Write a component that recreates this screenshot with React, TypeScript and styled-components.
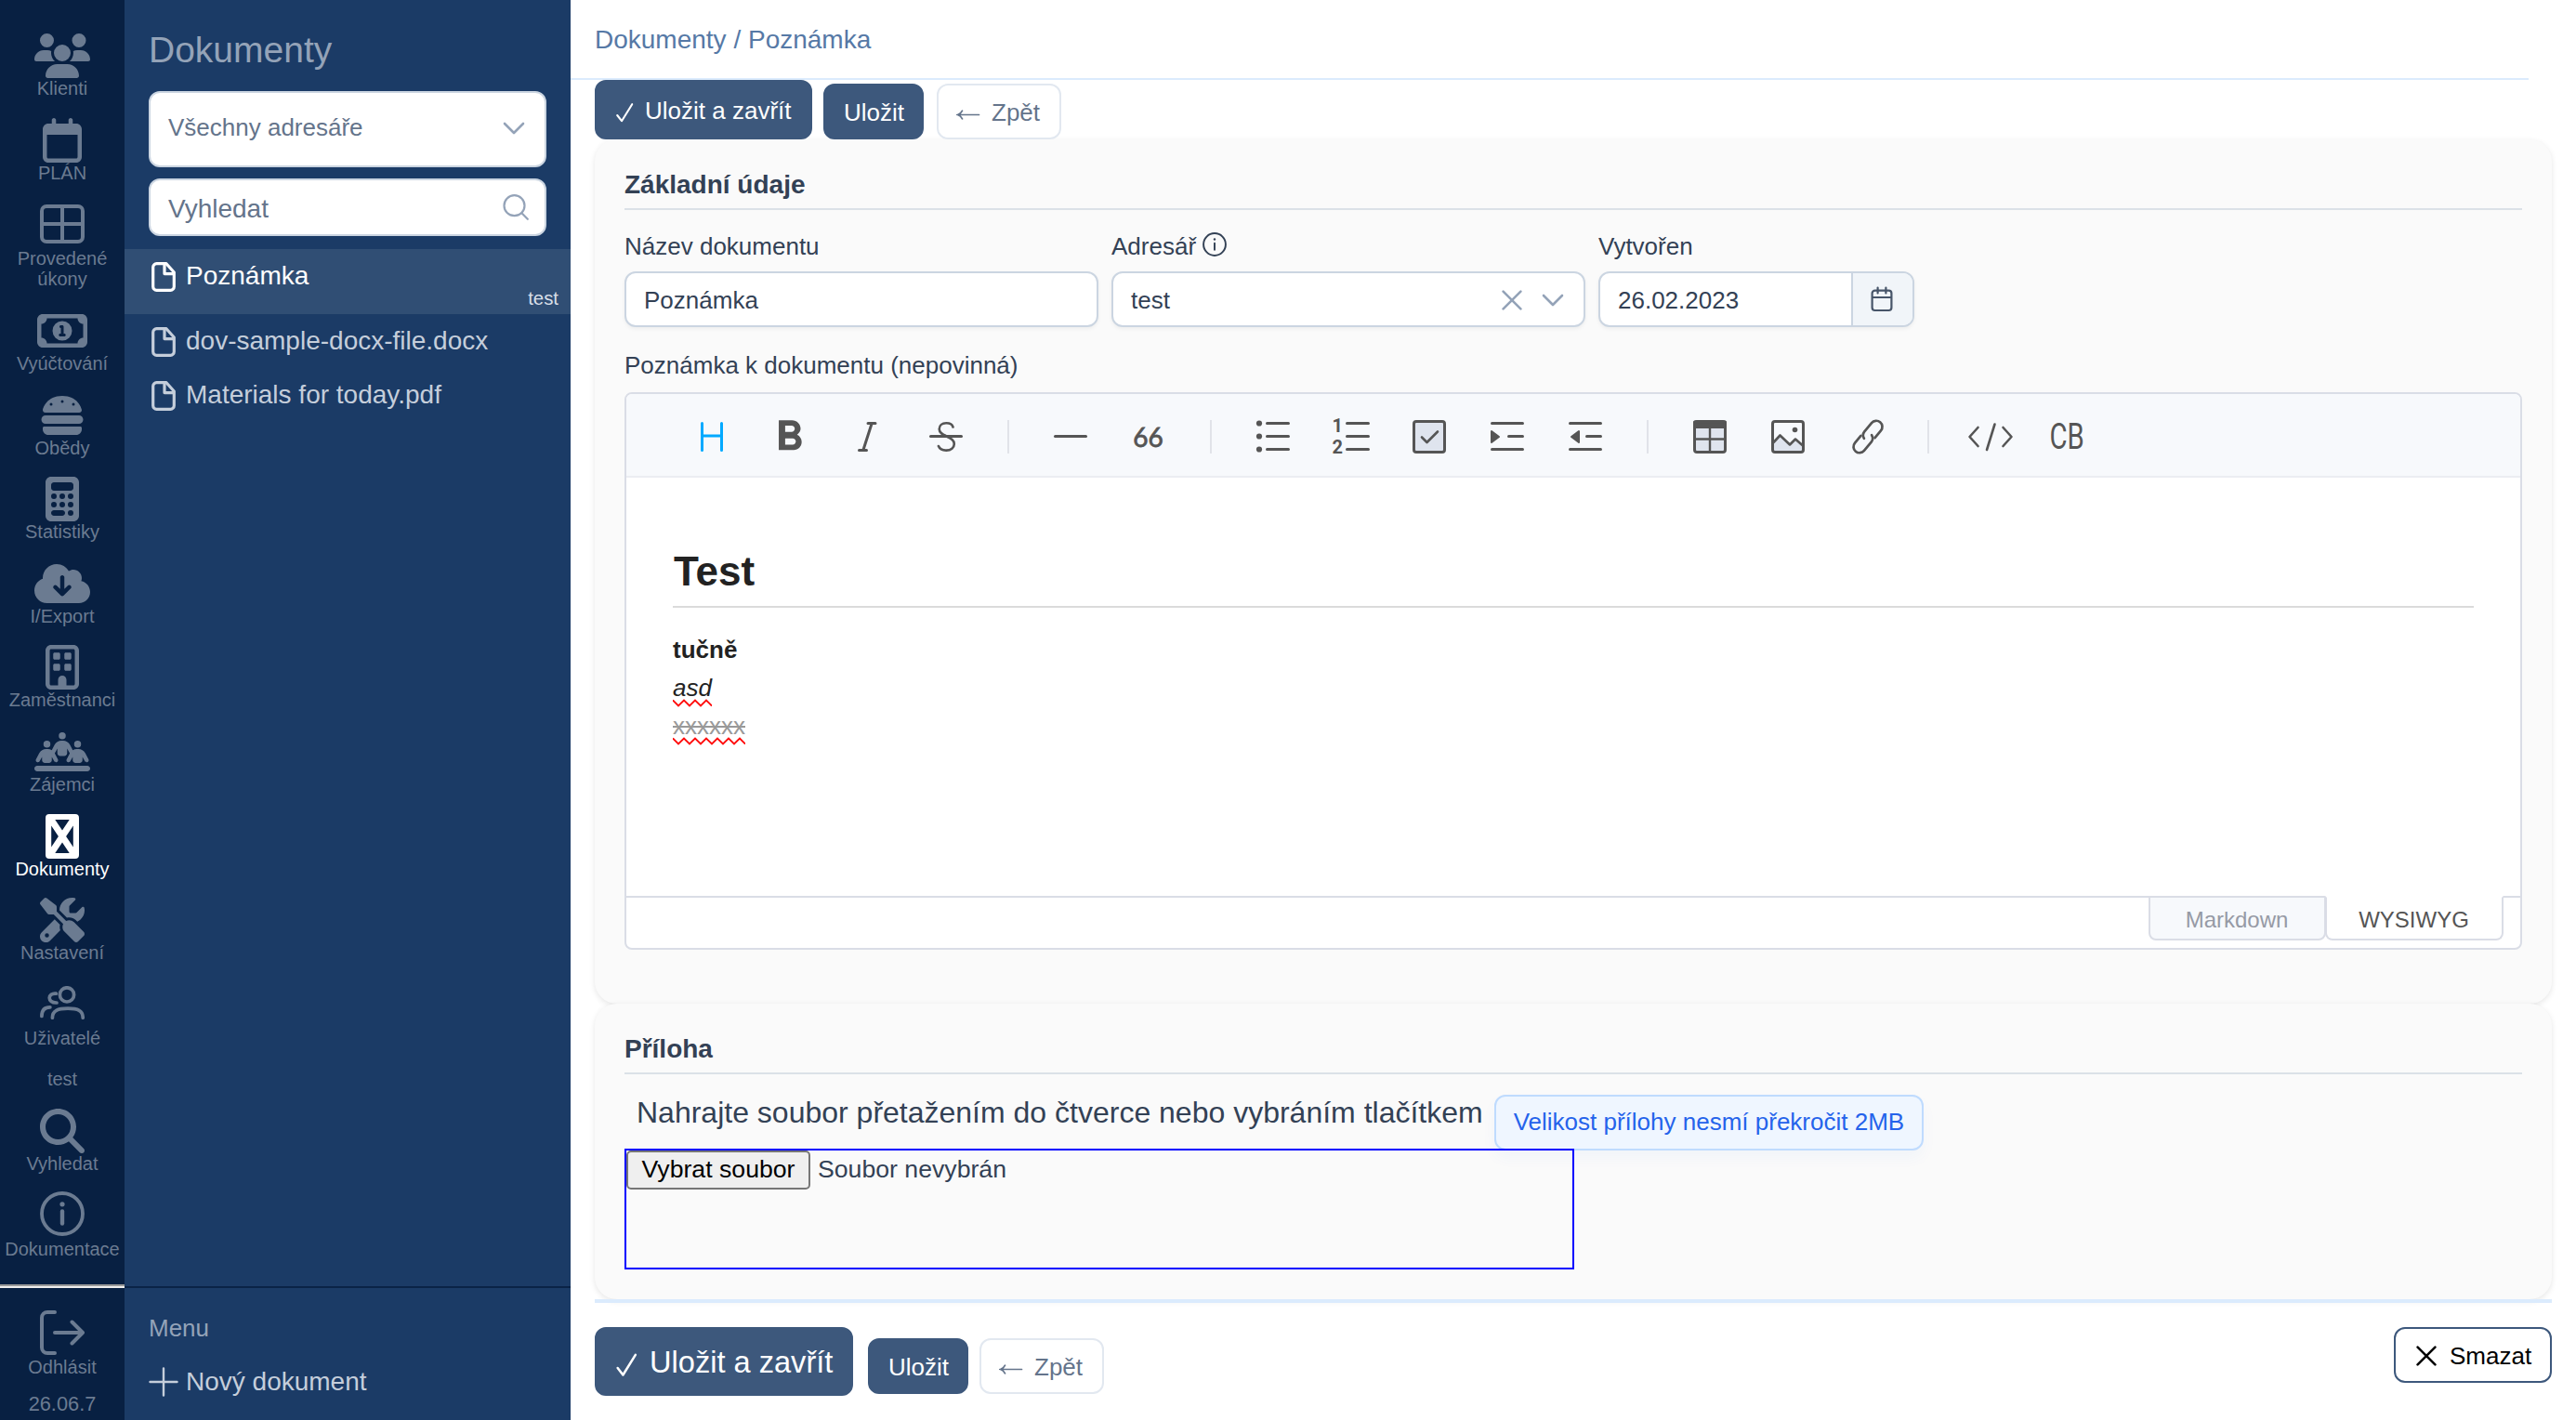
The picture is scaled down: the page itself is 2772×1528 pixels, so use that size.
import React from "react";
import styled, { createGlobalStyle, css } from "styled-components";
import {
  FaBurger,
  FaCalculator,
  FaCloudArrowDown,
  FaMagnifyingGlass,
  FaPeopleLine,
  FaRegBuilding,
  FaRegCalendar,
  FaRegMoneyBill1,
  FaScrewdriverWrench,
  FaUsers,
} from "react-icons/fa6";
import { MdFormatBold } from "react-icons/md";

const GlobalStyle = createGlobalStyle`
  * {
    box-sizing: border-box;
  }
  body {
    margin: 0;
    background: #fff;
    color: #334155;
    font-family: "Liberation Sans", Arial, sans-serif;
    font-size: 26px;
  }
  button, input {
    font-family: inherit;
    font-size: inherit;
    margin: 0;
  }
  svg {
    display: block;
    flex-shrink: 0;
  }
`;

const Layout = styled.div`
  display: flex;
  width: 2772px;
  height: 1528px;
  overflow: hidden;
`;

/* ---------- left rail ---------- */

const Rail = styled.nav`
  display: flex;
  flex-direction: column;
  justify-content: space-between;
  width: 134px;
  flex-shrink: 0;
  background: #082042;
  color: #6b7b91;
`;

const RailList = styled.div`
  display: flex;
  flex-direction: column;
  gap: 19.8px;
  padding-top: 36.4px;
`;

const RailItem = styled.a<{ $active?: boolean; $textOnly?: boolean }>`
  display: flex;
  flex-direction: column;
  align-items: center;
  padding-top: ${({ $textOnly }) => ($textOnly ? "2px" : "0")};
  font-size: 20px;
  line-height: 22.8px;
  text-align: center;
  color: ${({ $active }) => ($active ? "#fff" : "inherit")};
`;

const RailIcon = styled.span<{ $shift?: number }>`
  display: flex;
  align-items: center;
  justify-content: center;
  height: ${({ $shift }) => ($shift ? "49px" : "48px")};
  padding-bottom: ${({ $shift }) => ($shift || 0) * 2}px;
`;

const RailFooter = styled.div`
  display: flex;
  flex-direction: column;
  height: 146px;
`;

const RailDivider = styled.hr`
  width: 100%;
  height: 4px;
  margin: 0 0 25px;
  border: 0;
  border-top: 2px solid #9a9a9a;
  border-bottom: 2px solid #eee;
`;

const Version = styled.div`
  margin-top: 16px;
  font-size: 21.8px;
  line-height: 24px;
  text-align: center;
`;

/* ---------- documents panel ---------- */

const Panel = styled.aside`
  display: flex;
  flex-direction: column;
  width: 480px;
  flex-shrink: 0;
  background: #1b3b66;
  color: #c5cedb;
`;

const PanelTitle = styled.h1`
  margin: 0;
  padding: 30px 26px 20px;
  font-size: 39px;
  font-weight: 400;
  line-height: 48px;
  color: #94a3b8;
`;

const PanelFilters = styled.div`
  display: flex;
  flex-direction: column;
  gap: 12px;
  padding: 0 26px 14px;
`;

const FilterBox = styled.div<{ $tall?: boolean }>`
  display: flex;
  align-items: center;
  justify-content: space-between;
  height: ${({ $tall }) => ($tall ? "82px" : "62px")};
  padding: ${({ $tall }) => ($tall ? "0 21px 3px 19px" : "0 17px 0 19px")};
  border: 2px solid #cbd5e1;
  border-radius: 12px;
  background: #fff;
  color: #64748b;
  font-size: ${({ $tall }) => ($tall ? "26px" : "28px")};

  span {
    padding-top: ${({ $tall }) => ($tall ? "0" : "3px")};
  }
`;

const DocList = styled.div`
  flex: 1;
`;

const DocItem = styled.div<{ $selected?: boolean }>`
  display: flex;
  flex-direction: column;
  padding-left: 29px;
  height: ${({ $selected }) => ($selected ? "70px" : "58px")};
  background: ${({ $selected }) => ($selected ? "#304e74" : "none")};
  color: ${({ $selected }) => ($selected ? "#fff" : "inherit")};
`;

const DocRow = styled.div`
  display: flex;
  align-items: center;
  height: 58px;
  flex-shrink: 0;
  gap: 11px;
  padding-top: 2px;
  font-size: 28px;
  line-height: 32px;

  span {
    padding-bottom: 2px;
  }
`;

const DocTag = styled.div`
  margin: -17px 13px 0 0;
  font-size: 20.4px;
  line-height: 24px;
  text-align: right;
  color: #d9dfe8;
`;

const PanelFooter = styled.div`
  height: 144px;
  padding: 27px 0 0 26px;
  border-top: 2px solid #0a2347;
`;

const PanelCaption = styled.div`
  margin-bottom: 12px;
  font-size: 26px;
  line-height: 32px;
  color: #94a3b8;
`;

const NewDocument = styled.div`
  display: flex;
  align-items: center;
  gap: 8px;
  height: 58px;
  padding-top: 1px;
  font-size: 28px;
  line-height: 32px;
`;

/* ---------- content ---------- */

const Main = styled.main`
  display: flex;
  flex-direction: column;
  flex: 1;
`;

const Breadcrumb = styled.header`
  display: flex;
  align-items: center;
  width: 2107px;
  height: 86px;
  padding: 1px 0 0 26px;
  border-bottom: 2px solid #dbebfd;
  font-size: 28px;
  color: #5679a6;
`;

const Body = styled.div`
  padding: 0 26px;
`;

const ActionBar = styled.div`
  display: flex;
  align-items: flex-end;
  height: 64px;
`;

const Button = styled.button<{ $variant?: "primary" | "plain" | "danger"; $large?: boolean }>`
  display: flex;
  align-items: center;
  height: 60px;
  padding: 1px 21px 0;
  border: 2px solid #3d587c;
  border-radius: 12px;
  background: #3d587c;
  color: #fff;
  line-height: 34px;
  white-space: nowrap;

  ${({ $variant }) =>
    $variant === "plain" &&
    css`
      padding: 1px 19px 0;
      border-color: #e2e8f0;
      background: #fff;
      color: #64748b;
    `}

  ${({ $variant }) =>
    $variant === "danger" &&
    css`
      gap: 14px;
      width: 170px;
      padding: 1px 22px 0;
      background: #fff;
      color: #000;
    `}

  ${({ $large }) =>
    $large &&
    css`
      height: 74px;
      font-size: 32.6px;
    `}
`;

const SaveCloseButton = styled(Button)`
  height: ${({ $large }) => ($large ? "74px" : "64px")};
  width: ${({ $large }) => ($large ? "278px" : "234px")};
  margin-right: ${({ $large }) => ($large ? "16px" : "12px")};
  padding-left: 20px;
  gap: ${({ $large }) => ($large ? "13px" : "12px")};

  svg {
    margin-top: ${({ $large }) => ($large ? "6px" : "4px")};
  }
`;

const SaveButton = styled(Button)<{ $gap: number }>`
  width: 108px;
  margin-right: ${({ $gap }) => $gap}px;
  padding: 1px 20px 0;
`;

const BackButton = styled(Button)`
  width: 134px;
  gap: 12px;

  svg {
    margin-top: 4px;
  }
`;

const Card = styled.section<{ $height: number }>`
  height: ${({ $height }) => $height}px;
  padding: 33px 32px 0;
  border-radius: 24px;
  background: #fafafa;
  box-shadow: 0 2px 6px rgba(0, 0, 0, 0.1);
`;

const CardTitle = styled.h2`
  margin: 0;
  padding-bottom: 9px;
  border-bottom: 2px solid #dbe1e7;
  font-size: 28px;
  font-weight: 700;
  line-height: 32px;
`;

const Fields = styled.div`
  display: flex;
  gap: 14px;
  margin: 24px 0 26px;
`;

const Field = styled.div<{ $width: number }>`
  width: ${({ $width }) => $width}px;
`;

const Label = styled.label`
  display: flex;
  align-items: center;
  gap: 7px;
  height: 30px;
  line-height: 30px;

  svg {
    margin-bottom: 5px;
  }
`;

const Control = styled.div`
  display: flex;
  align-items: center;
  height: 60px;
  margin-top: 12px;
  padding-left: 19px;
  border: 2px solid #cbd5e1;
  border-radius: 12px;
  background: #fff;
  box-shadow: 0 2px 4px rgba(18, 18, 23, 0.05);
  overflow: hidden;

  span {
    flex: 1;
    padding-top: 2px;
  }
`;

const SelectIcons = styled.div`
  display: flex;
  align-items: center;
  gap: 21px;
  padding: 2px 21px 0 0;
`;

const DateButton = styled.div`
  display: flex;
  align-items: center;
  justify-content: center;
  width: 66px;
  height: 56px;
  padding-right: 2px;
  border-left: 2px solid #cbd5e1;
  background: #f1f5f9;
`;

/* ---------- editor ---------- */

const Editor = styled.div`
  display: flex;
  flex-direction: column;
  height: 600px;
  margin-top: 14px;
  border: 2px solid #dadde6;
  border-radius: 8px;
  background: #fff;
  overflow: hidden;
`;

const Toolbar = styled.div`
  display: flex;
  align-items: center;
  gap: 20px;
  height: 90px;
  padding: 4px 0 0 60px;
  border-bottom: 2px solid #ebedf2;
  background: #f7f9fc;
`;

const ToolDivider = styled.span`
  width: 2px;
  height: 36px;
  margin: 0 14px;
  background: #e1e3e9;
`;

const Tool = styled.span<{ $active?: boolean }>`
  display: flex;
  align-items: center;
  justify-content: center;
  width: 64px;
  height: 64px;
  color: ${({ $active }) => ($active ? "#00a9ff" : "#555")};
`;

const BoldIcon = styled(MdFormatBold)`
  margin-right: 2px;
`;

const QuoteGlyph = styled.span`
  padding-right: 1px;
  font-family: Lato, sans-serif;
  font-size: 28px;
  font-weight: 400;
  line-height: 32px;
  -webkit-text-stroke: 0.8px #555;
`;

const CodeBlockGlyph = styled.span`
  margin-right: 3px;
  font-family: Roboto, sans-serif;
  font-size: 38px;
  line-height: 44px;
  transform: scaleX(0.77);
`;

const Content = styled.div`
  flex: 1;
  padding: 75px 50px 0;
  font-size: 26px;
  line-height: 41px;
  color: #222;

  h2 {
    margin: 0 0 25px;
    padding-bottom: 11px;
    border-bottom: 2px solid #dbdbdb;
    font-size: 44px;
    line-height: 52px;
    text-indent: 1px;
  }
  p {
    margin: 0;
    height: 41px;
  }
  del {
    color: #999;
  }
`;

const Misspelled = styled.span`
  position: relative;
  display: inline-block;

  svg {
    position: absolute;
    left: 0;
    bottom: 0;
  }
`;

const ModeBar = styled.div`
  display: flex;
  justify-content: flex-end;
  height: 56px;
  padding-right: 18px;
  border-top: 2px solid #dadde6;
`;

const ModeTab = styled.div<{ $active?: boolean }>`
  display: flex;
  align-items: center;
  justify-content: center;
  width: ${({ $active }) => ($active ? "192px" : "191px")};
  height: 48px;
  margin: -2px 0 0 ${({ $active }) => ($active ? "-1px" : "0")};
  padding: 3px 1px 0 0;
  border: 2px solid #dadde6;
  border-top-color: ${({ $active }) => ($active ? "#fff" : "#dadde6")};
  border-radius: 0 0 8px 8px;
  background: ${({ $active }) => ($active ? "#fff" : "#f7f9fc")};
  color: ${({ $active }) => ($active ? "#555" : "#969aa5")};
  font-size: 24px;
  line-height: 28px;
`;

/* ---------- attachment ---------- */

const UploadRow = styled.div`
  display: flex;
  align-items: flex-start;
  gap: 12px;
  height: 80px;
  padding: 22px 0 0 13px;
`;

const UploadHint = styled.div`
  padding-top: 1px;
  font-size: 32px;
  line-height: 37px;
  white-space: nowrap;
`;

const SizeBadge = styled.div`
  display: flex;
  align-items: center;
  width: 462px;
  height: 60px;
  padding: 0 0 2px 19px;
  border: 2px solid #bfdbfe;
  border-radius: 12px;
  background: #eff6ff;
  box-shadow: 0 8px 16px rgba(37, 99, 235, 0.04);
  color: #2563eb;
  white-space: nowrap;
`;

const DropZone = styled.div`
  position: relative;
  display: flex;
  align-items: flex-start;
  gap: 8px;
  width: 1022px;
  height: 130px;
  border: 2px solid #0000ff;
  font-size: 26.67px;
  line-height: 41px;
`;

const FileButton = styled.button`
  width: 198px;
  height: 42px;
  padding: 0 0 1px;
  border: 2px solid #767676;
  border-radius: 5px;
  background: #efefef;
  color: #000;
`;

const FooterBar = styled.footer`
  display: flex;
  align-items: flex-start;
  justify-content: space-between;
  position: relative;
  padding-top: 26px;
  border-top: 4px solid #dbebfd;
`;

const FooterActions = styled.div`
  display: flex;

  > * + * {
    margin-top: 12px;
  }
`;

/* ---------- icons ---------- */

const WindowIcon = () => (
  <svg width="48" height="42" viewBox="0 0 48 42" fill="none" stroke="currentColor" strokeWidth="4">
    <rect x="2" y="2" width="44" height="38" rx="5" />
    <path d="M24 2v38M2 21h44" />
  </svg>
);

const CrossBoxIcon = () => (
  <svg width="36" height="48" viewBox="0 0 36 48" fill="currentColor">
    <path
      fillRule="evenodd"
      d="M4 0h28a4 4 0 0 1 4 4v40a4 4 0 0 1-4 4H4a4 4 0 0 1-4-4V4a4 4 0 0 1 4-4zM10.3 6L18 17.5 25.7 6zM6.2 12.5v23L13.9 24zM29.8 12.5L22.1 24l7.7 11.5zM10.3 42h15.4L18 30.5z"
    />
  </svg>
);

const PeopleIcon = () => (
  <svg width="48" height="36" viewBox="0 0 48 36" fill="none" stroke="currentColor" strokeWidth="3.7" strokeLinecap="round">
    <circle cx="29" cy="9.4" r="7.6" />
    <path d="M13.4 34.2C13.4 26.5 19 24.2 30 24.2s16.2 2.3 16.2 10" />
    <path d="M17.4 8.2C8 7 7.4 18.4 18 18" />
    <path d="M1.9 32.4c0-6.6 3-9.6 9-9.6" />
  </svg>
);

const InfoIcon = ({ size, thin }: { size: number; thin?: boolean }) => (
  <svg width={size} height={size} viewBox="0 0 48 48" fill="none" stroke="currentColor" strokeWidth={thin ? 3.6 : 3.8} strokeLinecap="round">
    <circle cx="24" cy="24" r="22" />
    <path d="M24 21.5v13" strokeWidth={thin ? 3.6 : 4.4} />
    <circle cx="24" cy="13.8" r={thin ? 2.2 : 2.6} fill="currentColor" stroke="none" />
  </svg>
);

const LogoutIcon = () => (
  <svg width="48" height="48" viewBox="0 0 48 48" fill="none" stroke="currentColor" strokeWidth="4" strokeLinecap="round" strokeLinejoin="round">
    <path d="M16 2H8a6 6 0 0 0-6 6v32a6 6 0 0 0 6 6h8" />
    <path d="M16 24h30M34.5 12.5L46 24 34.5 35.5" />
  </svg>
);

const FileIcon = () => (
  <svg width="26" height="32" viewBox="0 0 26 32" fill="none" stroke="currentColor" strokeWidth="3.2" strokeLinejoin="round">
    <path d="M16 1.7H5.5a3.8 3.8 0 0 0-3.8 3.8v21a3.8 3.8 0 0 0 3.8 3.8h15a3.8 3.8 0 0 0 3.8-3.8V11z" />
    <path d="M14 2v10.6h10" />
  </svg>
);

const PlusIcon = () => (
  <svg width="32" height="32" viewBox="0 0 32 32" fill="none" stroke="currentColor" strokeWidth="2.4" strokeLinecap="round">
    <path d="M16 1.5v29M1.5 16h29" />
  </svg>
);

const ChevronIcon = () => (
  <svg width="24" height="14" viewBox="0 0 24 14" fill="none" stroke="#94a3b8" strokeWidth="2.6" strokeLinecap="round" strokeLinejoin="round">
    <path d="M2 2l10 10L22 2" />
  </svg>
);

const SearchIcon = () => (
  <svg width="28" height="28" viewBox="0 0 28 28" fill="none" stroke="#94a3b8" strokeWidth="2.2" strokeLinecap="round">
    <circle cx="12.5" cy="12.2" r="11" />
    <path d="M20.4 20.2L26.8 26.8" />
  </svg>
);

const CrossIcon = ({ color }: { color: string }) => (
  <svg width="22" height="22" viewBox="0 0 22 22" fill="none" stroke={color} strokeWidth="2.6" strokeLinecap="round">
    <path d="M1.6 1.6l18.8 18.8M20.4 1.6L1.6 20.4" />
  </svg>
);

const CheckIcon = ({ large }: { large?: boolean }) => (
  <svg width={large ? 24 : 20} height={large ? 27 : 22} viewBox="0 0 20 22" fill="none" stroke="currentColor" strokeWidth="2.1" strokeLinecap="round" strokeLinejoin="round">
    <path d="M2.2 14L7 20.2 18.2 2.2" />
  </svg>
);

const ArrowIcon = () => (
  <svg width="26" height="14" viewBox="0 0 26 14" fill="none" stroke="currentColor" strokeWidth="1.7" strokeLinecap="round">
    <path d="M1.5 7.5h23M6.5 3.2C5.4 5.6 4 6.8 1.5 7.5c2.5.7 3.9 1.9 5 4.3" />
  </svg>
);

const CalendarIcon = () => (
  <svg width="24" height="28" viewBox="0 0 24 28" fill="none" stroke="#475569" strokeWidth="2.2" strokeLinecap="round">
    <rect x="1.6" y="4.6" width="20.8" height="21.4" rx="3" />
    <path d="M2 12h20M7.6 1.5v6M16.4 1.5v6" />
  </svg>
);

const ToolIcon = ({ children }: { children: React.ReactNode }) => (
  <svg width="64" height="64" viewBox="0 0 64 64" fill="none" stroke="currentColor" strokeWidth="3" strokeLinecap="round" strokeLinejoin="round">
    {children}
  </svg>
);

const Squiggle = ({ width }: { width: number }) => {
  const points: string[] = [];
  for (let x = 0, i = 0; x <= width; x += 6, i++) {
    points.push(`${x},${i % 2 ? 7.5 : 1.5}`);
  }
  return (
    <svg width={width} height="9" viewBox={`0 0 ${width} 9`} fill="none" stroke="#ff0000" strokeWidth="1.8">
      <polyline points={points.join(" ")} />
    </svg>
  );
};

const railItems = [
  { title: "Klienti", icon: <FaUsers size={48} style={{ width: 60 }} /> },
  { title: "PLÁN", icon: <FaRegCalendar size={48} /> },
  { title: "Provedené úkony", icon: <WindowIcon />, shift: 1 },
  { title: "Vyúčtování", icon: <FaRegMoneyBill1 size={48} style={{ width: 54 }} /> },
  { title: "Obědy", icon: <FaBurger size={48} /> },
  { title: "Statistiky", icon: <FaCalculator size={48} /> },
  { title: "I/Export", icon: <FaCloudArrowDown size={48} style={{ width: 60 }} /> },
  { title: "Zaměstnanci", icon: <FaRegBuilding size={48} /> },
  { title: "Zájemci", icon: <FaPeopleLine size={48} style={{ width: 60 }} /> },
  { title: "Dokumenty", icon: <CrossBoxIcon />, active: true },
  { title: "Nastavení", icon: <FaScrewdriverWrench size={48} /> },
  { title: "Uživatelé", icon: <PeopleIcon />, shift: 2 },
  { title: "test" },
  { title: "Vyhledat", icon: <FaMagnifyingGlass size={48} /> },
  { title: "Dokumentace", icon: <InfoIcon size={48} />, shift: 2 },
];

const documents = [
  { name: "Poznámka", tag: "test", selected: true },
  { name: "dov-sample-docx-file.docx" },
  { name: "Materials for today.pdf" },
];

const EditorToolbar: React.FC = () => (
  <Toolbar>
    <Tool $active>
      <ToolIcon>
        <path d="M21.5 17.5v29M42.5 17.5v29M21.5 31h21" />
      </ToolIcon>
    </Tool>
    <Tool>
      <BoldIcon size={55} />
    </Tool>
    <Tool>
      <ToolIcon>
        <path d="M32 17.5h8M22.5 46.5h8M36 18L27 46" />
      </ToolIcon>
    </Tool>
    <Tool>
      <ToolIcon>
        <path d="M15.5 31.5h33" />
        <path
          strokeWidth="2.6"
          d="M39.5 21.5c-.8-2.5-3.6-4.2-7-4.2-4.6 0-7.8 2.6-7.8 6.4 0 3.8 3.4 5.6 7.8 7.8 5 2.4 8.3 4.2 8.3 8.3 0 4-3.6 6.8-8.4 6.8-4.2 0-7.4-1.8-8.5-4.6"
        />
      </ToolIcon>
    </Tool>
    <ToolDivider />
    <Tool>
      <ToolIcon>
        <path d="M15.5 31.5h33" />
      </ToolIcon>
    </Tool>
    <Tool>
      <QuoteGlyph>66</QuoteGlyph>
    </Tool>
    <ToolDivider />
    <Tool>
      <ToolIcon>
        <path d="M25.5 17.5h23M25.5 31.5h23M25.5 45.5h23" />
        <g fill="currentColor" stroke="none">
          <circle cx="17" cy="17.5" r="3.1" />
          <circle cx="17" cy="31.5" r="3.1" />
          <circle cx="17" cy="45.5" r="3.1" />
        </g>
      </ToolIcon>
    </Tool>
    <Tool>
      <ToolIcon>
        <path d="M27.5 17.5h23M27.5 31.5h23M27.5 45.5h23" />
        <g fill="currentColor" stroke="none" fontFamily="Roboto, sans-serif" fontWeight="700" fontSize="20">
          <text x="11.5" y="27">1</text>
          <text x="11.5" y="50">2</text>
        </g>
      </ToolIcon>
    </Tool>
    <Tool>
      <ToolIcon>
        <rect x="15.5" y="15.5" width="33" height="33" rx="2.5" fill="#dfe4ee" />
        <path d="M24 32.5l5.5 5.5L41 26.5" strokeWidth="2.6" />
      </ToolIcon>
    </Tool>
    <Tool>
      <ToolIcon>
        <path d="M15.5 17.5h33M33.5 31.5h15M15.5 45.5h33" />
        <path d="M15 26v12l8-6z" fill="currentColor" strokeWidth="2" />
      </ToolIcon>
    </Tool>
    <Tool>
      <ToolIcon>
        <path d="M15.5 17.5h33M33.5 31.5h15M15.5 45.5h33" />
        <path d="M25 26v12l-8-6z" fill="currentColor" strokeWidth="2" />
      </ToolIcon>
    </Tool>
    <ToolDivider />
    <Tool>
      <ToolIcon>
        <rect x="15.5" y="15.5" width="33" height="33" rx="2.5" fill="#dfe4ee" />
        <path d="M15.5 16h33v5.5h-33z" fill="currentColor" />
        <path d="M32 22v26M16 34.5h32" strokeWidth="2.4" />
      </ToolIcon>
    </Tool>
    <Tool>
      <ToolIcon>
        <path d="M16 40l7.5-9.5 10 10 6-6 8.5 7v5q0 2-2 2H18q-2 0-2-2z" fill="#dfe4ee" stroke="none" />
        <rect x="15.5" y="15.5" width="33" height="33" rx="2.5" />
        <path d="M16.5 38l7-7.5 10.5 10 6-6 8 7" strokeWidth="2.6" />
        <circle cx="39.5" cy="24.5" r="2.8" fill="currentColor" stroke="none" />
      </ToolIcon>
    </Tool>
    <Tool>
      <ToolIcon>
        <g transform="translate(2 0) rotate(-50 32 32)" strokeWidth="2.7">
          <path d="M28 25.5H18a6.5 6.5 0 0 0 0 13h12a6.5 6.5 0 0 0 6-4.5" />
          <path d="M36 38.5h10a6.5 6.5 0 0 0 0-13H34a6.5 6.5 0 0 0-6 4.5" />
        </g>
      </ToolIcon>
    </Tool>
    <ToolDivider />
    <Tool>
      <ToolIcon>
        <path d="M18.5 22L9.5 32l9 10M45.5 22l9 10-9 10M36.5 18.5L28 46" strokeWidth="2.6" />
      </ToolIcon>
    </Tool>
    <Tool>
      <CodeBlockGlyph>CB</CodeBlockGlyph>
    </Tool>
  </Toolbar>
);

const App: React.FC = () => {
  return (
    <>
      <GlobalStyle />
      <Layout>
        <Rail>
          <RailList>
            {railItems.map((item) => (
              <RailItem key={item.title} $active={item.active} $textOnly={!item.icon}>
                {item.icon && <RailIcon $shift={item.shift}>{item.icon}</RailIcon>}
                {item.title}
              </RailItem>
            ))}
          </RailList>
          <RailFooter>
            <RailDivider />
            <RailItem>
              <RailIcon $shift={2}>
                <LogoutIcon />
              </RailIcon>
              Odhlásit
            </RailItem>
            <Version>26.06.7</Version>
          </RailFooter>
        </Rail>

        <Panel>
          <PanelTitle>Dokumenty</PanelTitle>
          <PanelFilters>
            <FilterBox $tall>
              <span>Všechny adresáře</span>
              <ChevronIcon />
            </FilterBox>
            <FilterBox>
              <span>Vyhledat</span>
              <SearchIcon />
            </FilterBox>
          </PanelFilters>
          <DocList>
            {documents.map((doc) => (
              <DocItem key={doc.name} $selected={doc.selected}>
                <DocRow>
                  <FileIcon />
                  <span>{doc.name}</span>
                </DocRow>
                {doc.tag && <DocTag>{doc.tag}</DocTag>}
              </DocItem>
            ))}
          </DocList>
          <PanelFooter>
            <PanelCaption>Menu</PanelCaption>
            <NewDocument>
              <PlusIcon />
              <span>Nový dokument</span>
            </NewDocument>
          </PanelFooter>
        </Panel>

        <Main>
          <Breadcrumb>Dokumenty / Poznámka</Breadcrumb>
          <Body>
            <ActionBar>
              <SaveCloseButton>
                <CheckIcon />
                Uložit a zavřít
              </SaveCloseButton>
              <SaveButton $gap={14}>Uložit</SaveButton>
              <BackButton $variant="plain">
                <ArrowIcon />
                Zpět
              </BackButton>
            </ActionBar>

            <Card $height={930}>
              <CardTitle>Základní údaje</CardTitle>
              <Fields>
                <Field $width={510}>
                  <Label>Název dokumentu</Label>
                  <Control>
                    <span>Poznámka</span>
                  </Control>
                </Field>
                <Field $width={510}>
                  <Label>
                    Adresář
                    <InfoIcon size={26} thin />
                  </Label>
                  <Control>
                    <span>test</span>
                    <SelectIcons>
                      <CrossIcon color="#94a3b8" />
                      <ChevronIcon />
                    </SelectIcons>
                  </Control>
                </Field>
                <Field $width={340}>
                  <Label>Vytvořen</Label>
                  <Control>
                    <span>26.02.2023</span>
                    <DateButton>
                      <CalendarIcon />
                    </DateButton>
                  </Control>
                </Field>
              </Fields>
              <Label>Poznámka k dokumentu (nepovinná)</Label>
              <Editor>
                <EditorToolbar />
                <Content>
                  <h2>Test</h2>
                  <p>
                    <strong>tučně</strong>
                  </p>
                  <p>
                    <Misspelled>
                      <em>asd</em>
                      <Squiggle width={42} />
                    </Misspelled>
                  </p>
                  <p>
                    <Misspelled>
                      <del>xxxxxx</del>
                      <Squiggle width={78} />
                    </Misspelled>
                  </p>
                </Content>
                <ModeBar>
                  <ModeTab>Markdown</ModeTab>
                  <ModeTab $active>WYSIWYG</ModeTab>
                </ModeBar>
              </Editor>
            </Card>

            <Card $height={318}>
              <CardTitle>Příloha</CardTitle>
              <UploadRow>
                <UploadHint>Nahrajte soubor přetažením do čtverce nebo vybráním tlačítkem</UploadHint>
                <SizeBadge>Velikost přílohy nesmí překročit 2MB</SizeBadge>
              </UploadRow>
              <DropZone>
                <FileButton>Vybrat soubor</FileButton>
                Soubor nevybrán
              </DropZone>
            </Card>

            <FooterBar>
              <FooterActions>
                <SaveCloseButton $large>
                  <CheckIcon large />
                  Uložit a zavřít
                </SaveCloseButton>
                <SaveButton $gap={12}>Uložit</SaveButton>
                <BackButton $variant="plain">
                  <ArrowIcon />
                  Zpět
                </BackButton>
              </FooterActions>
              <Button $variant="danger">
                <CrossIcon color="#000" />
                Smazat
              </Button>
            </FooterBar>
          </Body>
        </Main>
      </Layout>
    </>
  );
};

export default App;
